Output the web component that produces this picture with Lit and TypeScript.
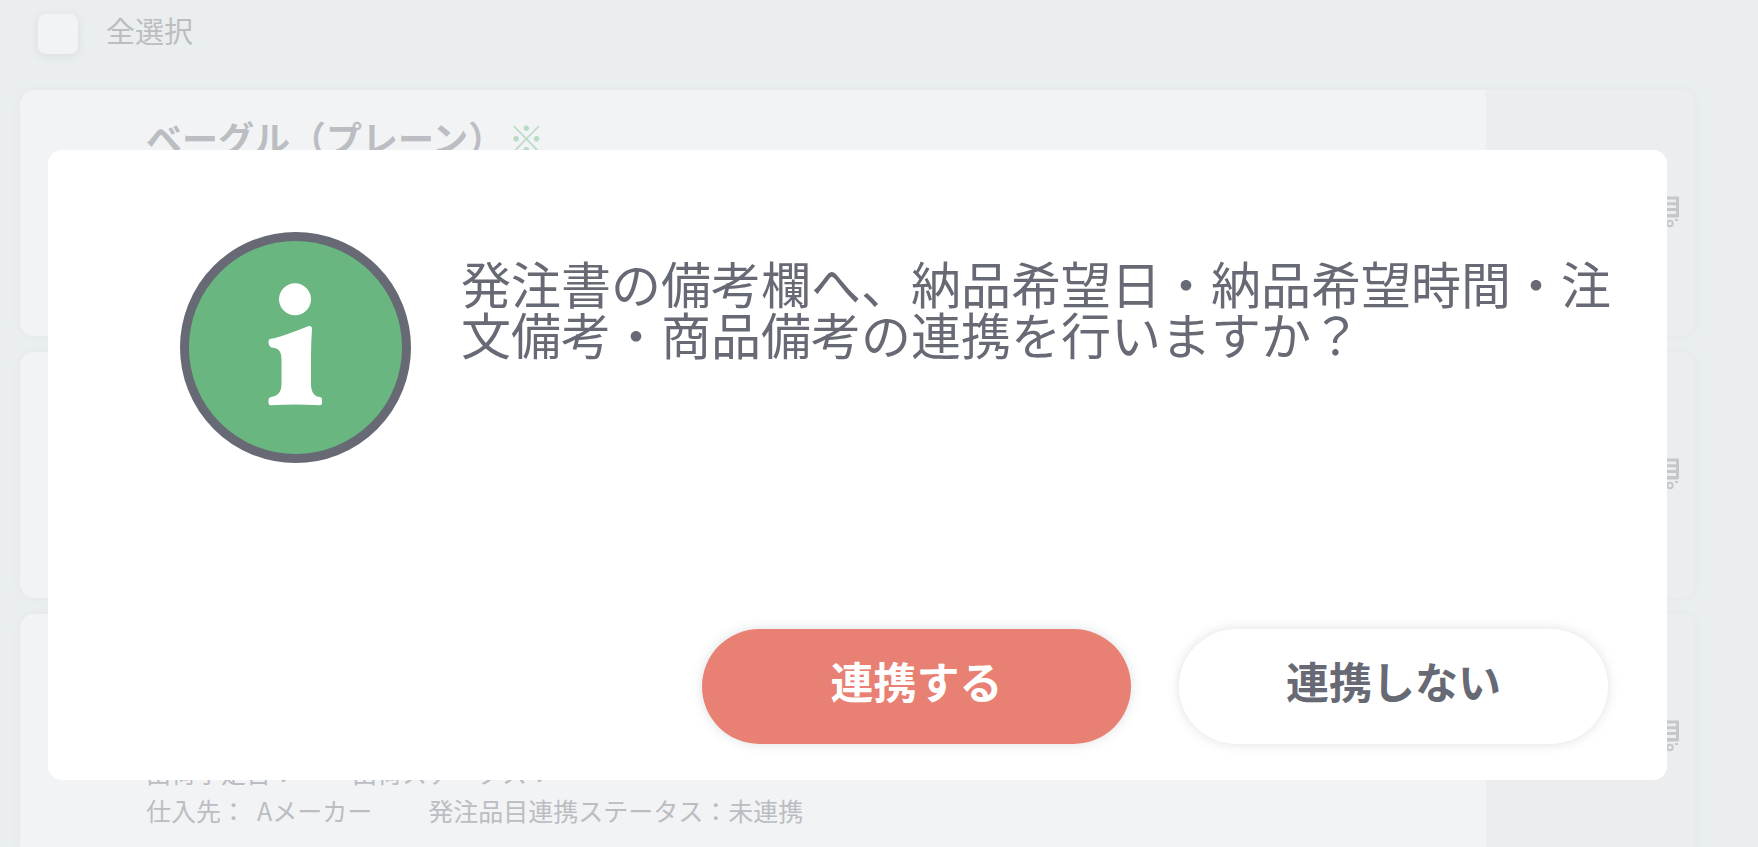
import { LitElement, html, css, svg } from "lit";
import { customElement, property } from "lit/decorators.js";

interface OrderItem {
  name: string;
  supplier: string;
  linkStatus: string;
}

const items: OrderItem[] = [
  { name: "ベーグル（プレーン）", supplier: "Aメーカー", linkStatus: "未連携" },
  { name: "ベーグル（プレーン）", supplier: "Aメーカー", linkStatus: "未連携" },
  { name: "ベーグル（プレーン）", supplier: "Aメーカー", linkStatus: "未連携" },
];

@customElement("order-card")
export class OrderCard extends LitElement {
  @property({ attribute: false }) item!: OrderItem;

  static styles = css`
    :host {
      display: flex;
      flex: none;
      min-height: 246px;
      border-radius: 14px;
      overflow: hidden;
      background: #f1f3f5;
      box-shadow: 0 0 10px #e3e7e9;
    }
    .body {
      flex: 1;
      display: flex;
      flex-direction: column;
      justify-content: space-between;
      padding: 21px 24px 31px 126px;
    }
    .name {
      display: flex;
      gap: 4px;
      margin: 0;
      font-size: 36px;
      line-height: 52px;
      font-weight: 700;
    }
    .mark {
      font-weight: 700;
      color: #b9dac5;
    }
    .row {
      display: flex;
      gap: 56px;
      font-size: 25px;
      line-height: 38px;
    }
    .field {
      display: flex;
      gap: 11px;
    }
    .side {
      display: flex;
      align-items: center;
      justify-content: flex-end;
      width: 193px;
      padding: 0 16px 2px 0;
      background: #ecedef;
    }
    .cart {
      width: 40px;
      height: 32px;
    }
  `;

  render() {
    return html`
      <div class="body">
        <h2 class="name">${this.item.name}<span class="mark">※</span></h2>
        <div>
          <div class="row"><span>出荷予定日：</span><span>出荷ステータス：</span></div>
          <div class="row">
            <span class="field"><span>仕入先：</span><span>${this.item.supplier}</span></span>
            <span>発注品目連携ステータス：${this.item.linkStatus}</span>
          </div>
        </div>
      </div>
      <div class="side">
        <svg class="cart" viewBox="0 0 40 32" fill="none" stroke="#c6c7c9" aria-hidden="true">
          <path d="M0 1.5h6l4 18.500h29" stroke-width="3" />
          <path d="M8 2h30.500v18M10 7.800h28M11 13.500h27M11 19.500h29" stroke-width="3" />
          <circle cx="16" cy="27.500" r="2.800" stroke-width="2" />
          <circle cx="31" cy="27.500" r="2.800" stroke-width="2" />
          <path d="M36 24h3" stroke-width="2" />
        </svg>
      </div>
    `;
  }
}

@customElement("confirm-dialog")
export class ConfirmDialog extends LitElement {
  static styles = css`
    :host {
      display: block;
      border-radius: 14px;
      background: #fff;
      color: #676a74;
    }
    .message {
      display: flex;
      align-items: flex-start;
      gap: 50px;
      padding: 82px 20px 0 132px;
    }
    .info {
      flex: none;
      width: 231px;
      height: 231px;
    }
    .text {
      margin: 0;
      padding-top: 25px;
      font-size: 50px;
      line-height: 51px;
    }
    .actions {
      display: flex;
      justify-content: flex-end;
      gap: 48px;
      padding: 166px 59px 36px;
    }
    .button {
      width: 429px;
      height: 115px;
      padding: 0 0 14px;
      border: 0;
      border-radius: 58px;
      background: #fff;
      color: inherit;
      font-family: inherit;
      font-size: 43px;
      font-weight: 700;
      box-shadow: 0 0 12px rgba(90, 100, 115, 0.2);
    }
    .primary {
      background: #e88073;
      color: #fff;
    }
  `;

  render() {
    return html`
      <div class="message">
        <svg class="info" viewBox="0 0 231 231" aria-hidden="true">
          ${svg`
            <circle cx="115.500" cy="115.500" r="111" fill="#6ab681" stroke="#676a74" stroke-width="9" />
            <circle cx="115" cy="67.300" r="16" fill="#fff" />
            <path fill="#fff" d="M128 94.200Q132 93 132 97Q131 110 131 124V152C131 160 134 164.500 140 165Q142 165.300 142 167V171.500Q142 173.300 140 173.300Q115 171.500 91 173.300Q88.500 173.500 88.500 171V168Q88.500 165.300 91 165C98 164 101.500 160 101.500 152V127C101.500 119 98 115.500 91 115.500Q88.500 113.500 88.500 111V109.500Q88.500 107 91 106.800Q103 104.500 128 94.200Z" />
          `}
        </svg>
        <p class="text">
          発注書の備考欄へ、納品希望日・納品希望時間・注文備考・商品備考の連携を行いますか？
        </p>
      </div>
      <div class="actions">
        <button class="button primary" type="button">連携する</button>
        <button class="button" type="button">連携しない</button>
      </div>
    `;
  }
}

@customElement("app-root")
export class AppRoot extends LitElement {
  static styles = css`
    :host {
      display: block;
      position: relative;
      height: 100vh;
      overflow: hidden;
      background: #eaeeef;
      color: #bbbdc2;
      font-family: "Noto Sans CJK JP", sans-serif;
    }
    .page {
      display: flex;
      flex-direction: column;
      gap: 16px;
      padding: 14px 63px 0 20px;
    }
    .select-all {
      display: flex;
      align-items: flex-start;
      gap: 28px;
      padding: 0 18px 20px;
      font-size: 29px;
      line-height: 32px;
    }
    .check {
      appearance: none;
      width: 40px;
      height: 40px;
      margin: 0;
      border-radius: 8px;
      background: #f1f3f5;
      box-shadow: 0 2px 10px #d9dde1;
    }
    .overlay {
      position: absolute;
      inset: 0;
      padding: 150px 91px 0 48px;
    }
  `;

  render() {
    return html`
      <main class="page">
        <div class="select-all">
          <input class="check" type="checkbox" id="all" />
          <label for="all">全選択</label>
        </div>
        ${items.map((item) => html`<order-card .item=${item}></order-card>`)}
      </main>
      <div class="overlay">
        <confirm-dialog role="dialog" aria-modal="true" aria-label="連携の確認"></confirm-dialog>
      </div>
    `;
  }
}
